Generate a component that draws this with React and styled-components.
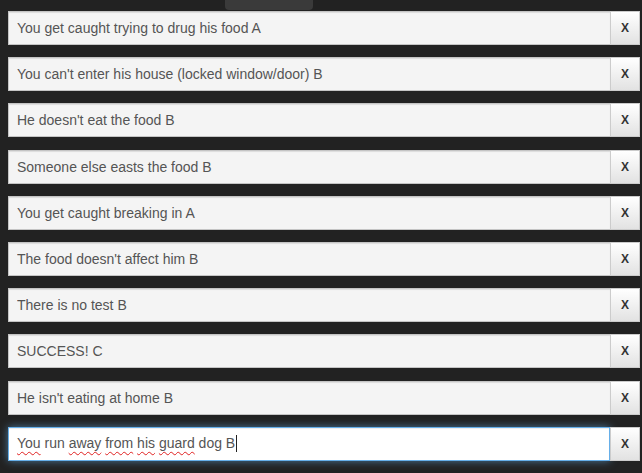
import styled, { createGlobalStyle } from "styled-components";

const GlobalStyle = createGlobalStyle`
  html, body {
    margin: 0;
    padding: 0;
    background: #222222;
  }
  body {
    font-family: "Liberation Sans", Arial, sans-serif;
  }
`;

const Page = styled.div`
  width: 642px;
  height: 473px;
  background: #222222;
  position: relative;
  overflow: hidden;
  box-sizing: border-box;
  padding: 11px 2px 0 8px;
`;

const Tab = styled.div`
  position: absolute;
  top: 0;
  left: 225px;
  width: 88px;
  height: 10px;
  background: #3a3a3a;
  border-radius: 0 0 4px 4px;
`;

const List = styled.div`
  display: flex;
  flex-direction: column;
  gap: 12.2px;
`;

const Row = styled.div`
  display: flex;
  height: 34px;
`;

const Field = styled.input`
  flex: 1;
  min-width: 0;
  box-sizing: border-box;
  height: 34px;
  margin: 0;
  padding: 0 8px;
  font-family: "Liberation Sans", Arial, sans-serif;
  font-size: 14px;
  color: #555555;
  background: #f4f4f4;
  border: 1px solid #c4c4c4;
  border-right: none;
  box-shadow: inset 0 1px 1px rgba(0, 0, 0, 0.1);
  outline: none;
`;

const FocusedField = styled.div`
  flex: 1;
  min-width: 0;
  box-sizing: border-box;
  height: 34px;
  padding: 0 8px;
  display: flex;
  align-items: center;
  font-size: 14px;
  color: #555555;
  background: #ffffff;
  border: 1px solid #66afe9;
  box-shadow: inset 0 1px 1px rgba(0, 0, 0, 0.075),
    0 0 8px rgba(102, 175, 233, 0.6);
`;

const Value = styled.span`
  white-space: pre;
`;

const Typo = styled.span`
  text-decoration: underline wavy #e02020;
  text-decoration-thickness: 1px;
  text-underline-offset: 3px;
`;

const Caret = styled.span`
  display: inline-block;
  width: 1px;
  height: 17px;
  vertical-align: -4px;
  background: #222;
  margin-left: 1px;
`;

const RemoveButton = styled.button`
  width: 30px;
  height: 34px;
  box-sizing: border-box;
  margin: 0;
  padding: 0;
  border: 1px solid #cccccc;
  background: linear-gradient(#ffffff, #e2e2e2);
  font-family: "Liberation Sans", Arial, sans-serif;
  font-size: 12px;
  font-weight: bold;
  color: #333333;
  cursor: pointer;
`;

const outcomes = [
  "You get caught trying to drug his food A",
  "You can't enter his house (locked window/door) B",
  "He doesn't eat the food B",
  "Someone else easts the food B",
  "You get caught breaking in A",
  "The food doesn't affect him B",
  "There is no test B",
  "SUCCESS! C",
  "He isn't eating at home B",
];

export default function App() {
  return (
    <>
      <GlobalStyle />
      <Page>
        <Tab />
        <List>
          {outcomes.map((text, i) => (
            <Row key={i}>
              <Field readOnly value={text} />
              <RemoveButton>X</RemoveButton>
            </Row>
          ))}
          <Row>
            <FocusedField>
              <Value>
                <Typo>You</Typo> run <Typo>away</Typo> <Typo>from</Typo>{" "}
                <Typo>his</Typo> <Typo>guard</Typo> dog B
                <Caret />
              </Value>
            </FocusedField>
            <RemoveButton>X</RemoveButton>
          </Row>
        </List>
      </Page>
    </>
  );
}
